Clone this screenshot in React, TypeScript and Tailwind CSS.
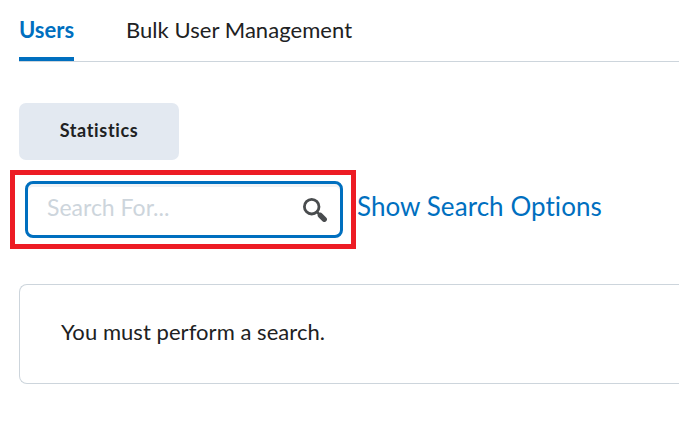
export default function App() {
  return (
    <main className="h-[424px] w-full overflow-hidden bg-white pl-[19px] font-['Lato',sans-serif] text-[#202122] [font-variant-ligatures:none]">
      <nav className="flex h-[62px] gap-[52px] border-b border-[#cdd5dc] text-[22px] leading-[60px]">
        <a className="h-[61px] w-[55px] border-b-4 border-[#006fbf] font-bold text-[#006fbf]">Users</a>
        <a className="tracking-[0.05px]">Bulk User Management</a>
      </nav>
      <button className="mt-[41px] block h-[57px] w-[160px] rounded-[7px] bg-[#e3e9f1] pb-[2px] text-[18px] font-bold tracking-[0.65px]">Statistics</button>
      <div className="-ml-[9px] mt-[10px] flex h-[79px] items-center">
        <div className="flex h-[79px] w-[346px] shrink-0 border-[5px] border-[#ed1c24] pl-[10px] pt-[6px]">
          <label className="flex h-[57px] w-[318px] items-center justify-between rounded-[8px] border-[3px] border-[#006fbf] pl-[19px] pr-[13px] shadow-[inset_0_3px_0_#f1f2f5]">
            <span className="pb-[5px] text-[23px] leading-[28px] text-[#cdd5dc]">Search For...</span>
            <svg width="24" height="24" viewBox="0 0 24 24" fill="none" stroke="#494c4e"><circle cx="8.7" cy="8.7" r="7.3" strokeWidth="2.8" /><path d="M14 14l3 3" strokeWidth="2.5" /><path d="M17.3 17.3l4 4" strokeWidth="5.2" strokeLinecap="round" /></svg>
          </label>
        </div>
        <a className="ml-[1px] pb-[6px] text-[26px] tracking-[0.06px] text-[#006fbf]">Show Search Options</a>
      </div>
      <section className="mt-[35px] flex h-[100px] items-center rounded-l-[8px] border border-r-0 border-[#cdd5dc] pb-[5px] pl-[41px] text-[22px] tracking-[0.05px]">You must perform a search.</section>
    </main>
  );
}
